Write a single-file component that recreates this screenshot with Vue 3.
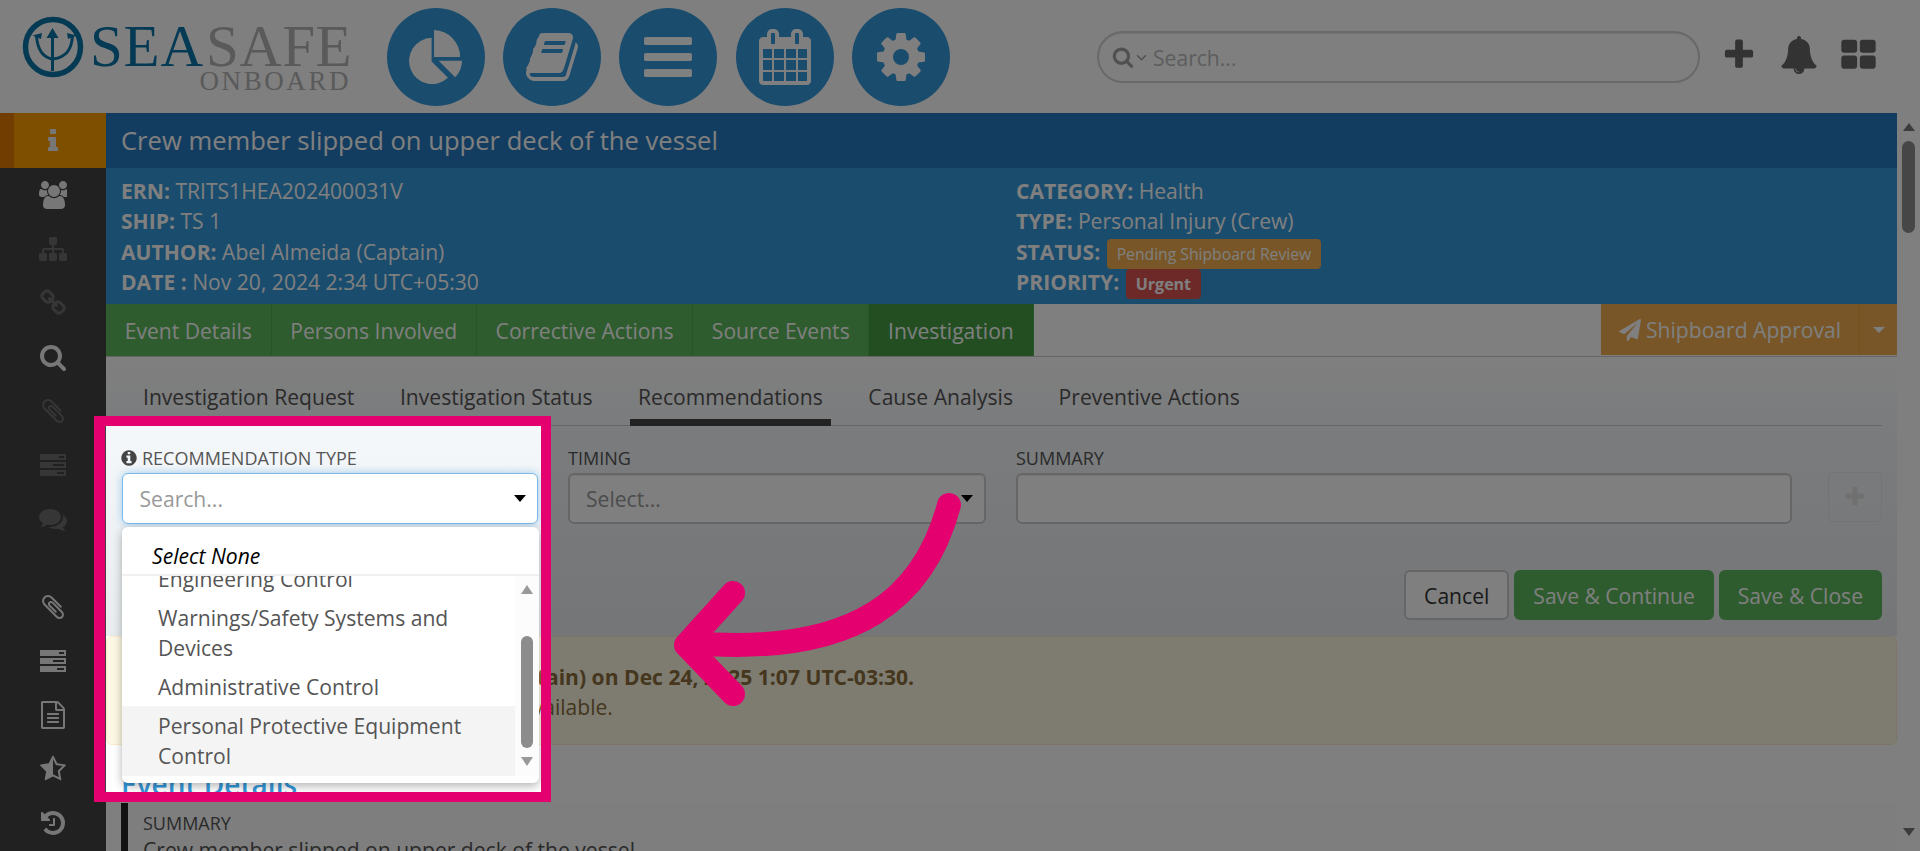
<template>
  <div class="app">
    <!-- top bar -->
    <header class="topbar">
      <div class="logo">
        <svg class="logo-mark" viewBox="0 0 62 62">
          <circle cx="31" cy="31" r="27.5" fill="none" stroke="#0b75a8" stroke-width="5.5" />
          <path d="M30.5 12 L24.5 22 H29 V55 H32 V22 H36.5 Z" fill="#0b75a8" />
          <path d="M14.5 20 C15.5 33 20 41 30 43 M50.5 20 C49.5 33 45 41 31 43" fill="none" stroke="#0b75a8" stroke-width="3" />
          <path d="M10.5 19.5 L20 17 L19 23 Z M54.5 19.5 L45 17 L46 23 Z" fill="#0b75a8" />
        </svg>
        <div class="logo-words">
          <div class="logo-main"><span class="sea">SEA</span><span class="safe">SAFE</span></div>
          <div class="logo-sub">ONBOARD</div>
        </div>
      </div>

      <nav class="round-nav">
        <a v-for="n in navIcons" :key="n.name" class="round-btn">
          <svg :viewBox="n.box"><path :d="icons[n.name]" /></svg>
        </a>
      </nav>

      <div class="global-search">
        <svg class="gs-icon" viewBox="0 0 1792 1792"><path :d="icons.search" /></svg>
        <svg class="gs-chev" viewBox="0 0 10 6"><path d="M1 1l4 4 4-4" fill="none" stroke="currentColor" stroke-width="1.4" /></svg>
        <span>Search...</span>
      </div>

      <div class="top-icons">
        <svg class="ti-plus" viewBox="0 0 1792 1792"><path :d="icons.plus" /></svg>
        <svg class="ti-bell" viewBox="0 0 1792 1792"><path :d="icons.bell" /></svg>
        <svg class="ti-grid" viewBox="0 0 1792 1792"><path :d="icons.grid" /></svg>
      </div>
    </header>

    <div class="body">
      <!-- left rail -->
      <aside class="rail">
        <div
          v-for="item in railItems"
          :key="item.key"
          class="rail-item"
          :class="[item.state, { 'after-gap': item.gap }]"
        >
          <svg v-if="item.icon !== 'server'" viewBox="0 0 1792 1792"><path :d="icons[item.icon]" /></svg>
          <svg v-else viewBox="0 0 28 24">
            <path fill-rule="evenodd" d="M1 1h26v6H1zM20 3v2h5V3zM1 9h26v6H1zM14 11v2h11v-2zM1 17h26v6H1zM18 19v2h7v-2z" />
          </svg>
        </div>
      </aside>

      <main class="main">
        <div class="title-bar">Crew member slipped on upper deck of the vessel</div>

        <section class="info">
          <div class="info-col">
            <div class="info-line"><b>ERN:</b> TRITS1HEA202400031V</div>
            <div class="info-line"><b>SHIP:</b> TS 1</div>
            <div class="info-line"><b>AUTHOR:</b> Abel Almeida (Captain)</div>
            <div class="info-line"><b>DATE :</b> Nov 20, 2024 2:34 UTC+05:30</div>
          </div>
          <div class="info-col">
            <div class="info-line"><b>CATEGORY:</b> Health</div>
            <div class="info-line"><b>TYPE:</b> Personal Injury (Crew)</div>
            <div class="info-line"><b>STATUS:</b> <span class="badge badge-orange">Pending Shipboard Review</span></div>
            <div class="info-line"><b>PRIORITY:</b> <span class="badge badge-red">Urgent</span></div>
          </div>
        </section>

        <div class="main-tabs">
          <a v-for="t in mainTabs" :key="t" class="main-tab" :class="{ active: t === 'Investigation' }">{{ t }}</a>
          <div class="approval">
            <a class="approval-btn">
              <svg viewBox="0 0 1792 1792"><path :d="icons.plane" /></svg>
              Shipboard Approval
            </a>
            <a class="approval-caret"><i /></a>
          </div>
        </div>

        <section class="form-area">
          <div class="sub-tabs">
            <a v-for="t in subTabs" :key="t" class="sub-tab" :class="{ active: t === 'Recommendations' }">{{ t }}</a>
          </div>

          <div class="form-row">
            <div class="field">
              <label>
                <svg viewBox="0 0 1792 1792"><path :d="icons.infoCircle" /></svg>
                RECOMMENDATION TYPE
              </label>
              <div class="select focused">
                <span>Search...</span><i class="caret" />
              </div>
              <!-- open dropdown -->
              <div class="dropdown">
                <div class="select-none">Select None</div>
                <div class="dd-body">
                  <ul class="dd-list">
                    <li v-for="o in options" :key="o" :class="{ hover: o.startsWith('Personal') }">{{ o }}</li>
                  </ul>
                  <div class="dd-scroll">
                    <i class="arrow-up" />
                    <div class="dd-thumb-track"><div class="dd-thumb" /></div>
                    <i class="arrow-down" />
                  </div>
                </div>
              </div>
            </div>
            <div class="field">
              <label>TIMING</label>
              <div class="select">
                <span>Select...</span><i class="caret" />
              </div>
            </div>
            <div class="field">
              <label>SUMMARY</label>
              <div class="select" />
            </div>
            <button class="add-btn">
              <svg viewBox="0 0 1792 1792"><path :d="icons.plus" /></svg>
            </button>
          </div>

          <div class="form-actions">
            <button class="btn">Cancel</button>
            <button class="btn btn-green">Save &amp; Continue</button>
            <button class="btn btn-green">Save &amp; Close</button>
          </div>
        </section>

        <div class="alert">
          <p class="alert-head">Updated by Abel Almeida (Captain) on Dec 24, 2025 1:07 UTC-03:30.</p>
          <p class="alert-text">No recommendation notes are available.</p>
        </div>

        <h2 class="section-title">Event Details</h2>
        <div class="section-block">
          <div class="block-label">SUMMARY</div>
          <div class="block-text">Crew member slipped on upper deck of the vessel</div>
        </div>
      </main>

      <!-- page scrollbar -->
      <div class="page-scroll">
        <i class="ps-up" />
        <div class="ps-thumb" />
        <i class="ps-down" />
      </div>
    </div>

    <!-- tutorial overlay -->
    <div class="spotlight" />
    <svg class="pointer" viewBox="0 0 1920 851">
      <path d="M949 505 C925 595 860 657 692 643" />
      <path d="M733 593 L686 645 L733 694" />
    </svg>
  </div>
</template>

<script setup>
const icons = {
  // three separate wedges, the gaps are part of this logo's look
  pie: 'M718 130V915L1262 1459A768 768 0 1 1 718 130ZM800 -132V764H1664A896 896 0 0 0 800 -132ZM955 892H1728Q1728 1049 1668 1190T1500 1438Z',
  book: 'M1703 478q40 57 18 129l-275 906q-19 64-76.5 107.5t-122.5 43.5h-923q-77 0-148.5-53.5t-99.5-131.5q-24-67-2-127 0-4 3-27t4-37q1-8-3-21.5t-3-19.5q2-11 8-21t16.5-23.5 16.5-23.5q23-38 45-91.5t30-91.5q3-10 .5-30t-.5-28q3-11 17-28t17-23q21-36 42-92t25-90q1-9-2.5-32t.5-28q4-13 22-30.5t22-22.5q19-26 42.5-84.5t27.5-96.5q1-8-3-25.5t-2-26.5q2-8 9-18t18-23 17-21q8-12 16.5-30.5t15-35 16-36 19.5-32 26.5-23.5 36-11.5 47.5 5.5l-1 3q38-9 51-9h761q74 0 114 56t18 130l-274 906q-36 119-71.5 153.5t-128.5 34.5h-869q-27 0-38 15-11 16-1 43 24 70 144 70h923q29 0 56-15.5t35-41.5l300-987q7-22 5-57 38 15 59 43zm-1064 2q-4 13 2 22.5t20 9.5h608q13 0 25.5-9.5t16.5-22.5l21-64q4-13-2-22.5t-20-9.5h-608q-13 0-25.5 9.5t-16.5 22.5zm-83 256q-4 13 2 22.5t20 9.5h608q13 0 25.5-9.5t16.5-22.5l21-64q4-13-2-22.5t-20-9.5h-608q-13 0-25.5 9.5t-16.5 22.5z',
  bars: 'M1664 1344v128q0 26-19 45t-45 19h-1408q-26 0-45-19t-19-45v-128q0-26 19-45t45-19h1408q26 0 45 19t19 45zm0-512v128q0 26-19 45t-45 19h-1408q-26 0-45-19t-19-45v-128q0-26 19-45t45-19h1408q26 0 45 19t19 45zm0-512v128q0 26-19 45t-45 19h-1408q-26 0-45-19t-19-45v-128q0-26 19-45t45-19h1408q26 0 45 19t19 45z',
  calendar: 'M192 1664h288v-288h-288v288zm352 0h320v-288h-320v288zm-352-352h288v-320h-288v320zm352 0h320v-320h-320v320zm-352-384h288v-288h-288v288zm736 736h320v-288h-320v288zm-384-736h320v-288h-320v288zm768 736h288v-288h-288v288zm-384-352h320v-320h-320v320zm-352-864v-288q0-13-9.5-22.5t-22.5-9.5h-64q-13 0-22.5 9.5t-9.5 22.5v288q0 13 9.5 22.5t22.5 9.5h64q13 0 22.5-9.5t9.5-22.5zm736 864h288v-320h-288v320zm-384-384h320v-288h-320v288zm384 0h288v-288h-288v288zm32-480v-288q0-13-9.5-22.5t-22.5-9.5h-64q-13 0-22.5 9.5t-9.5 22.5v288q0 13 9.5 22.5t22.5 9.5h64q13 0 22.5-9.5t9.5-22.5zm384-64v1280q0 52-38 90t-90 38h-1408q-52 0-90-38t-38-90v-1280q0-52 38-90t90-38h128v-96q0-66 47-113t113-47h64q66 0 113 47t47 113v96h384v-96q0-66 47-113t113-47h64q66 0 113 47t47 113v96h128q52 0 90 38t38 90z',
  cog: 'M1152 896q0-106-75-181t-181-75-181 75-75 181 75 181 181 75 181-75 75-181zm512-109v222q0 12-8 23t-20 13l-185 28q-19 54-39 91 35 50 107 138 10 12 10 25t-9 23q-27 37-99 108t-94 71q-12 0-26-9l-138-108q-44 23-91 38-16 136-29 186-7 28-36 28h-222q-14 0-24.5-8.5t-11.5-21.5l-28-184q-49-16-90-37l-141 107q-10 9-25 9-14 0-25-11-126-114-165-168-7-10-7-23 0-12 8-23 15-21 51-66.5t54-70.5q-27-50-41-99l-183-27q-13-2-21-12.5t-8-23.5v-222q0-12 8-23t19-13l186-28q14-46 39-92-40-57-107-138-10-12-10-24 0-10 9-23 26-36 98.5-107.5t94.5-71.5q13 0 26 10l138 107q44-23 91-38 16-136 29-186 7-28 36-28h222q14 0 24.5 8.5t11.5 21.5l28 184q49 16 90 37l142-107q9-9 24-9 13 0 25 10 129 119 165 170 7 8 7 22 0 12-8 23-15 21-51 66.5t-54 70.5q26 50 41 98l183 28q13 2 21 12.5t8 23.5z',
  search: 'M1216 832q0-185-131.5-316.5t-316.5-131.5-316.5 131.5-131.5 316.5 131.5 316.5 316.5 131.5 316.5-131.5 131.5-316.5zm512 832q0 52-38 90t-90 38q-54 0-90-38l-343-342q-179 124-399 124-143 0-273.5-55.5t-225-150-150-225-55.5-273.5 55.5-273.5 150-225 225-150 273.5-55.5 273.5 55.5 225 150 150 225 55.5 273.5q0 220-124 399l343 343q37 37 37 90z',
  plus: 'M1600 736v192q0 40-28 68t-68 28h-416v416q0 40-28 68t-68 28h-192q-40 0-68-28t-28-68v-416h-416q-40 0-68-28t-28-68v-192q0-40 28-68t68-28h416v-416q0-40 28-68t68-28h192q40 0 68 28t28 68v416h416q40 0 68 28t28 68z',
  bell: 'M912 1696q0-16-16-16-59 0-101.5-42.5t-42.5-101.5q0-16-16-16t-16 16q0 73 51.5 124.5t124.5 51.5q16 0 16-16zm816-288q0 52-38 90t-90 38h-448q0 106-75 181t-181 75-181-75-75-181h-448q-52 0-90-38t-38-90q50-42 91-88t85-119.5 74.5-158.5 50-206 19.5-260q0-152 117-282.5t307-158.5q-8-19-8-39 0-40 28-68t68-28 68 28 28 68q0 20-8 39 190 28 307 158.5t117 282.5q0 139 19.5 260t50 206 74.5 158.5 85 119.5 91 88z',
  grid: 'M832 1024v384q0 52-38 90t-90 38h-512q-52 0-90-38t-38-90v-384q0-52 38-90t90-38h512q52 0 90 38t38 90zm0-768v384q0 52-38 90t-90 38h-512q-52 0-90-38t-38-90v-384q0-52 38-90t90-38h512q52 0 90 38t38 90zm896 768v384q0 52-38 90t-90 38h-512q-52 0-90-38t-38-90v-384q0-52 38-90t90-38h512q52 0 90 38t38 90zm0-768v384q0 52-38 90t-90 38h-512q-52 0-90-38t-38-90v-384q0-52 38-90t90-38h512q52 0 90 38t38 90z',
  info: 'M1216 1344v128q0 26-19 45t-45 19h-512q-26 0-45-19t-19-45v-128q0-26 19-45t45-19h64v-384h-64q-26 0-45-19t-19-45v-128q0-26 19-45t45-19h384q26 0 45 19t19 45v576h64q26 0 45 19t19 45zm-128-1152v192q0 26-19 45t-45 19h-256q-26 0-45-19t-19-45v-192q0-26 19-45t45-19h256q26 0 45 19t19 45z',
  infoCircle: 'M1152 1376v-160q0-14-9-23t-23-9h-96v-512q0-14-9-23t-23-9h-320q-14 0-23 9t-9 23v160q0 14 9 23t23 9h96v320h-96q-14 0-23 9t-9 23v160q0 14 9 23t23 9h448q14 0 23-9t9-23zm-128-896v-160q0-14-9-23t-23-9h-192q-14 0-23 9t-9 23v160q0 14 9 23t23 9h192q14 0 23-9t9-23zm640 416q0 209-103 385.5t-279.5 279.5-385.5 103-385.5-103-279.5-279.5-103-385.5 103-385.5 279.5-279.5 385.5-103 385.5 103 279.5 279.5 103 385.5z',
  users: 'M593 896q-162 5-265 128h-134q-82 0-138-40.5t-56-118.5q0-353 124-353 6 0 43.5 21t97.5 42.5 119 21.5q67 0 133-23-5 37-5 66 0 139 81 256zm1071 637q0 120-73 189.5t-194 69.5h-874q-121 0-194-69.5t-73-189.5q0-53 3.5-103.5t14-109 26.5-108.5 43-97.5 62-81 85.5-53.5 111.5-20q10 0 43 21.5t73 48 107 48 135 21.5 135-21.5 107-48 73-48 43-21.5q61 0 111.5 20t85.5 53.5 62 81 43 97.5 26.5 108.5 14 109 3.5 103.5zm-1024-1277q0 106-75 181t-181 75-181-75-75-181 75-181 181-75 181 75 75 181zm704 384q0 159-112.5 271.5t-271.5 112.5-271.5-112.5-112.5-271.5 112.5-271.5 271.5-112.5 271.5 112.5 112.5 271.5zm576 225q0 78-56 118.5t-138 40.5h-134q-103-123-265-128 81-117 81-256 0-29-5-66 66 23 133 23 59 0 119-21.5t97.5-42.5 43.5-21q124 0 124 353zm-128-609q0 106-75 181t-181 75-181-75-75-181 75-181 181-75 181 75 75 181z',
  sitemap: 'M1792 1248v320q0 40-28 68t-68 28h-320q-40 0-68-28t-28-68v-320q0-40 28-68t68-28h96v-192h-512v192h96q40 0 68 28t28 68v320q0 40-28 68t-68 28h-320q-40 0-68-28t-28-68v-320q0-40 28-68t68-28h96v-192h-512v192h96q40 0 68 28t28 68v320q0 40-28 68t-68 28h-320q-40 0-68-28t-28-68v-320q0-40 28-68t68-28h96v-192q0-52 38-90t90-38h512v-192h-96q-40 0-68-28t-28-68v-320q0-40 28-68t68-28h320q40 0 68 28t28 68v320q0 40-28 68t-68 28h-96v192h512q52 0 90 38t38 90v192h96q40 0 68 28t28 68z',
  link: 'M1520 1216q0-40-28-68l-208-208q-28-28-68-28-42 0-72 32 3 3 19 18.5t21.5 21.5 15 19 13 25.5 3.5 27.5q0 40-28 68t-68 28q-15 0-27.5-3.5t-25.5-13-19-15-21.5-21.5-18.5-19q-33 31-33 73 0 40 28 68l206 207q27 27 68 27 40 0 68-26l147-146q28-28 28-67zm-703-705q0-40-28-68l-206-207q-28-28-68-28-39 0-68 27l-147 146q-28 28-28 67 0 40 28 68l208 208q27 27 68 27 42 0 72-31-3-3-19-18.5t-21.5-21.5-15-19-13-25.5-3.5-27.5q0-40 28-68t68-28q15 0 27.5 3.5t25.5 13 19 15 21.5 21.5 18.5 19q33-31 33-73zm895 705q0 120-85 203l-147 146q-83 83-203 83-121 0-204-85l-206-207q-83-83-83-203 0-123 88-209l-88-88q-86 88-208 88-120 0-204-84l-208-208q-84-84-84-204t85-203l147-146q83-83 203-83 121 0 204 85l206 207q83 83 83 203 0 123-88 209l88 88q86-88 208-88 120 0 204 84l208 208q84 84 84 204z',
  clip: 'M1596 1385q0 117-79 196t-196 79q-135 0-235-100l-777-776q-113-115-113-271 0-159 110-270t269-111q158 0 273 113l605 606q10 10 10 22 0 16-30.5 46.5t-46.5 30.5q-13 0-23-10l-606-607q-79-77-181-77-106 0-179 75t-73 181q0 105 76 181l776 777q63 63 145 63 64 0 106-42t42-106q0-82-63-145l-581-581q-26-24-60-24-29 0-48 19t-19 48q0 32 25 59l410 410q10 10 10 22 0 16-31 47t-47 31q-12 0-22-10l-410-410q-63-61-63-149 0-82 57-139t139-57q88 0 149 63l581 581q100 98 100 235z',
  comments: 'M1408 768q0 139-94 257t-256.5 186.5-353.5 68.5q-86 0-176-16-124 88-278 128-36 9-86 16h-3q-11 0-20.5-8t-11.5-21q-1-3-1-6.5t.5-6.5 2-6l2.5-5 3.5-5.5 4-5 4.5-5 4-4.5q5-6 23-25t26-29.5 22.5-29 25-38.5 20.5-44q-124-72-195-177t-71-224q0-139 94-257t256.5-186.5 353.5-68.5 353.5 68.5 256.5 186.5 94 257zm384 256q0 120-71 224.5t-195 176.5q10 24 20.5 44t25 38.5 22.5 29 26 29.5 23 25q1 1 4 4.5t4.5 5 4 5 3.5 5.5l2.5 5 2 6 .5 6.5-1 6.5q-3 14-13 22t-22 7q-50-7-86-16-154-40-278-128-90 16-176 16-271 0-472-132 58 4 88 4 161 0 309-45t264-129q125-92 192-212t67-254q0-77-23-152 129 71 204 178t75 230z',
  file: 'M1596 380q28 28 48 76t20 88v1152q0 40-28 68t-68 28h-1344q-40 0-68-28t-28-68v-1600q0-40 28-68t68-28h896q40 0 88 20t76 48zm-444-244v376h376q-10-29-22-41l-313-313q-12-12-41-22zm384 1528v-1024h-416q-40 0-68-28t-28-68v-416h-768v1536h1280zm-1024-864q0-14 9-23t23-9h704q14 0 23 9t9 23v64q0 14-9 23t-23 9h-704q-14 0-23-9t-9-23v-64zm736 224q14 0 23 9t9 23v64q0 14-9 23t-23 9h-704q-14 0-23-9t-9-23v-64q0-14 9-23t23-9h704zm0 256q14 0 23 9t9 23v64q0 14-9 23t-23 9h-704q-14 0-23-9t-9-23v-64q0-14 9-23t23-9h704z',
  star: 'M1250 957l257-250-356-52-66-10-30-60-159-322v963l59 31 318 168-60-355-12-66zm452-262l-363 354 86 500q5 33-6 51.5t-34 18.5q-17 0-40-12l-449-236-449 236q-23 12-40 12-23 0-34-18.5t-6-51.5l86-500-364-354q-32-32-23-59.5t54-34.5l502-73 225-455q20-41 49-41 28 0 49 41l225 455 502 73q45 7 54 34.5t-24 59.5z',
  history: 'M1664 896q0 156-61 298t-164 245-245 164-298 61q-172 0-327-72.5t-264-204.5q-7-10-6.5-22.5t8.5-20.5l137-138q10-9 25-9 16 2 23 12 73 95 179 147t225 52q104 0 198.5-40.5t163.5-109.5 109.5-163.5 40.5-198.5-40.5-198.5-109.5-163.5-163.5-109.5-198.5-40.5q-98 0-188 35.5t-160 101.5l137 138q31 30 14 69-17 40-59 40h-448q-26 0-45-19t-19-45v-448q0-42 40-59 39-17 69 14l130 129q107-101 244.5-156.5t284.5-55.5q156 0 298 61t245 164 164 245 61 298zm-640-288v448q0 14-9 23t-23 9h-320q-14 0-23-9t-9-23v-64q0-14 9-23t23-9h224v-352q0-14 9-23t23-9h64q14 0 23 9t9 23z',
  plane: 'M1764 11q33 24 27 64l-256 1536q-5 29-32 45-14 8-31 8-11 0-24-5l-453-185-242 295q-18 23-49 23-13 0-22-4-19-7-30.5-23.5t-11.5-36.5v-349l864-1059-1069 925-395-162q-37-14-40-55-2-40 32-59l1664-960q15-9 32-9 20 0 36 11z',
}

const std = '0 0 1792 1792'
const navIcons = [
  { name: 'pie', box: '-66 -164 1860 1860' },
  { name: 'book', box: std },
  { name: 'bars', box: std },
  { name: 'calendar', box: std },
  { name: 'cog', box: std },
]

const railItems = [
  { key: 1, icon: 'info', state: 'active' },
  { key: 2, icon: 'users' },
  { key: 3, icon: 'sitemap', state: 'off' },
  { key: 4, icon: 'link', state: 'off' },
  { key: 5, icon: 'search' },
  { key: 6, icon: 'clip', state: 'off' },
  { key: 7, icon: 'server', state: 'off' },
  { key: 8, icon: 'comments', state: 'off' },
  { key: 9, icon: 'clip', gap: true },
  { key: 10, icon: 'server' },
  { key: 11, icon: 'file' },
  { key: 12, icon: 'star' },
  { key: 13, icon: 'history' },
]

const mainTabs = ['Event Details', 'Persons Involved', 'Corrective Actions', 'Source Events', 'Investigation']
const subTabs = ['Investigation Request', 'Investigation Status', 'Recommendations', 'Cause Analysis', 'Preventive Actions']
const options = [
  'Engineering Control',
  'Warnings/Safety Systems and Devices',
  'Administrative Control',
  'Personal Protective Equipment Control',
]
</script>

<style scoped>
.app {
  position: relative;
  width: 1920px;
  height: 851px;
  overflow: hidden;
  display: flex;
  flex-direction: column;
  background: #fff;
  font-family: "Open Sans", "Liberation Sans", sans-serif;
  font-size: 21.1px;
  color: #555;
}

/* top bar */
.topbar {
  height: 113px;
  flex-shrink: 0;
  display: flex;
  align-items: center;
  position: relative;
}
.logo { display: flex; align-items: flex-start; width: 387px; padding-left: 22px; box-sizing: border-box; }
.logo-mark { width: 62px; height: 62px; margin-top: -2px; flex-shrink: 0; }
.logo-words { margin-left: 6px; font-family: "Liberation Serif", serif; }
.logo-main { font-size: 59px; line-height: 60px; height: 51px; margin-top: -2px; }
.sea { color: #0b75a8; letter-spacing: 0.8px; }
.safe { color: #b4b4b4; margin-left: 2px; letter-spacing: 0.5px; }
.logo-sub { color: #b4b4b4; font-size: 27px; line-height: 29px; letter-spacing: 2.6px; text-align: right; padding-right: 1px; }

.round-nav { display: flex; gap: 18.2px; }
.round-btn {
  width: 98px;
  height: 98px;
  border-radius: 50%;
  background: #3498db;
  display: flex;
  align-items: center;
  justify-content: center;
}
.round-btn svg { width: 56px; height: 56px; fill: #fff; }

.global-search {
  position: absolute;
  left: 1097px;
  top: 31px;
  width: 603px;
  height: 52px;
  box-sizing: border-box;
  border: 2px solid #d2d2d2;
  border-radius: 26px;
  display: flex;
  align-items: center;
  padding-left: 13px;
  color: #bbb;
  box-shadow: inset 0 1px 1px rgba(0, 0, 0, 0.08);
}
.gs-icon { width: 22px; height: 22px; fill: #a0a0a0; }
.gs-chev { width: 11px; height: 7px; margin: 0 6px 0 2px; color: #a0a0a0; }

.top-icons { position: absolute; left: 1724px; top: 36px; display: flex; align-items: center; }
.top-icons svg { fill: #666; }
.ti-plus { width: 36px; height: 36px; margin-left: -3px; }
.ti-bell { width: 38px; height: 38px; margin-left: 23px; }
.ti-grid { width: 37px; height: 37px; margin-left: 22px; }

/* body */
.body { flex: 1; display: flex; min-height: 0; }

.rail { width: 106px; flex-shrink: 0; background: #424242; display: flex; flex-direction: column; }
.rail-item {
  height: 54px;
  flex-shrink: 0;
  display: flex;
  align-items: center;
  justify-content: center;
}
.rail-item svg { width: 28px; height: 28px; fill: #eee; }
.rail-item.off svg { fill: #6c6c6c; }
.rail-item.active { height: 55px; background: #ff9f00; border-left: 14px solid #e47a00; box-sizing: border-box; padding-right: 14px; }
.rail-item.after-gap { margin-top: 34px; }

.main { flex: 1; min-width: 0; display: flex; flex-direction: column; }

.title-bar {
  height: 55px;
  flex-shrink: 0;
  display: flex;
  align-items: center;
  padding-left: 15px;
  background: #277ac0;
  color: #fff;
  font-size: 25.6px;
}

.info {
  height: 136px;
  flex-shrink: 0;
  box-sizing: border-box;
  background: #3498db;
  color: #fff;
  padding: 8px 15px 0;
  display: grid;
  grid-template-columns: 895px 1fr;
}
.info-line { height: 30.3px; line-height: 30px; white-space: nowrap; }
.info-line b { font-weight: 700; }
.badge {
  display: inline-block;
  border-radius: 4px;
  font-size: 15.7px;
  line-height: 30px;
  height: 30px;
  padding: 0 10px;
  vertical-align: top;
  margin-top: 2px;
}
.badge-orange { background: #f0ad4e; margin-left: 1px; }
.badge-red { background: #d9534f; font-weight: 700; font-size: 16px; margin-left: 1px; }

.main-tabs {
  height: 53px;
  flex-shrink: 0;
  display: flex;
  align-items: stretch;
  box-sizing: border-box;
  border-bottom: 1px solid #ccc;
  background: #fff;
}
.main-tab {
  background: #5cb85c;
  color: #fff;
  padding: 0 18.7px;
  display: flex;
  align-items: center;
  border-right: 1px solid #4cae4c;
}
.main-tab.active { background: #449d44; }
.approval { margin-left: auto; display: flex; height: 51px; color: #fff; background: #f0ad4e; }
.approval-btn { display: flex; align-items: center; gap: 5px; padding: 0 18px; border-right: 1px solid #eca237; width: 259px; box-sizing: border-box; white-space: nowrap; }
.approval-btn svg { width: 22px; height: 22px; fill: #fff; flex-shrink: 0; }
.approval-caret { width: 37px; display: flex; align-items: center; justify-content: center; }
.approval-caret i { border: 6px solid transparent; border-top-color: #fff; border-bottom: 0; }

.form-area {
  flex-shrink: 0;
  height: 279px;
  box-sizing: border-box;
  padding: 0 15px;
  background: linear-gradient(#fff, #f5f8fa 25%, #e8ecee);
}

.sub-tabs {
  height: 69px;
  box-sizing: border-box;
  display: flex;
  gap: 29.6px;
  align-items: stretch;
  padding-left: 14px;
  border-bottom: 1px solid #ccc;
}
.sub-tab {
  padding: 10px 8px 0;
  display: flex;
  align-items: center;
  color: #555;
}
.sub-tab.active { border-bottom: 7px solid #444; margin-bottom: -1px; padding-top: 16px; }

.form-row {
  display: grid;
  grid-template-columns: 416px 418px 776px 1fr;
  column-gap: 30px;
  padding: 20px 0 30px 1px;
  border-bottom: 1px solid #eee;
}
.field { position: relative; }
.field label {
  display: flex;
  align-items: center;
  gap: 4px;
  height: 24px;
  margin-bottom: 3px;
  font-size: 18px;
  color: #555;
}
.field label svg { width: 18px; height: 18px; fill: #444; margin-left: -2px; }
.select {
  height: 51px;
  box-sizing: border-box;
  border: 2px solid #ccc;
  border-radius: 6px;
  background: #fff;
  display: flex;
  align-items: center;
  justify-content: space-between;
  padding: 0 11px 0 16px;
  color: #999;
  box-shadow: inset 0 1px 1px rgba(0, 0, 0, 0.075);
}
.select.focused { border: 1.5px solid #7db8e8; padding-left: 16.5px; box-shadow: 0 0 8px rgba(102, 175, 233, 0.6); }
.caret { border: 6px solid transparent; border-top: 7px solid #000; border-bottom: 0; }

.dropdown {
  position: absolute;
  top: 81px;
  left: 0;
  right: -1px;
  height: 256px;
  box-sizing: border-box;
  background: #fff;
  border-radius: 6px;
  box-shadow: 0 3px 10px rgba(0, 0, 0, 0.3);
  z-index: 3;
  overflow: hidden;
  display: flex;
  flex-direction: column;
}
.select-none {
  height: 49px;
  flex-shrink: 0;
  box-sizing: border-box;
  padding: 12px 0 0 30px;
  line-height: 34px;
  font-style: italic;
  color: #000;
  border-bottom: 2px solid #f0f0f0;
}
.dd-body { height: 200px; display: flex; }
.dd-list {
  list-style: none;
  margin: 0;
  padding: 0;
  width: 393px;
  flex-shrink: 0;
  overflow: hidden;
  color: #555;
  line-height: 30px;
}
.dd-list li { padding: 4.5px 30px 4.5px 36px; }
.dd-list li:first-child { margin-top: -17px; }
.dd-list li.hover { background: #f4f4f4; padding-bottom: 5.5px; }
.dd-scroll { flex: 1; background: #fcfcfc; display: flex; flex-direction: column; align-items: center; padding-top: 9px; }
.arrow-up { border: 6px solid transparent; border-bottom: 9px solid #999; border-top: 0; }
.arrow-down { border: 6px solid transparent; border-top: 9px solid #999; border-bottom: 0; margin-top: 9px; }
.dd-thumb-track { height: 154px; width: 12px; display: flex; align-items: flex-end; }
.dd-thumb { width: 12px; height: 112px; border-radius: 6px; background: #8c8c8c; }

.add-btn {
  justify-self: end;
  align-self: end;
  width: 54px;
  height: 50px;
  margin-bottom: 2px;
  padding: 0;
  background: transparent;
  border: 1px solid #e8e8e8;
  border-radius: 4px;
  display: flex;
  align-items: center;
  justify-content: center;
}
.add-btn svg { width: 24px; height: 24px; fill: #e0e0e0; }

.form-actions { display: flex; justify-content: flex-end; gap: 5px; padding-top: 15px; }
.btn {
  height: 50px;
  padding: 0 18px;
  font: inherit;
  color: #333;
  background: #fff;
  border: 2px solid #ccc;
  border-radius: 6px;
}
.btn-green { padding: 0 17px; background: #5cb85c; border-color: #5cb85c; color: #fff; }

.alert {
  flex-shrink: 0;
  height: 109px;
  box-sizing: border-box;
  background: #fcf8e3;
  border: 1px solid #faebcc;
  border-radius: 6px;
  color: #8a6d3b;
  padding: 25px 0 0 112px;
  line-height: 30px;
}
.alert p { margin: 0; }
.alert-head { font-weight: 700; }
.alert-text { margin-left: -6px !important; }

.section-title {
  margin: 21px 0 0 15px;
  height: 37px;
  line-height: 37px;
  font-size: 28px;
  font-weight: 600;
  color: #3498db;
  flex-shrink: 0;
}
.section-block {
  margin-left: 15px;
  background: #fcfcfc;
  border-left: 7px solid #222;
  padding: 8px 15px 0;
  flex: 1;
}
.block-label { font-size: 18px; line-height: 24px; color: #555; }
.block-text { line-height: 30px; color: #555; }

.page-scroll {
  width: 23px;
  flex-shrink: 0;
  background: #fff;
  position: relative;
  display: flex;
  flex-direction: column;
  align-items: center;
}
.ps-up { margin-top: 10px; border: 6px solid transparent; border-bottom: 8px solid #777; border-top: 0; }
.ps-thumb { width: 13px; height: 92px; margin-top: 10px; border-radius: 7px; background: #8c8c8c; }
.ps-down { position: absolute; bottom: 15px; border: 6px solid transparent; border-top: 8px solid #777; border-bottom: 0; }

/* tutorial overlay */
.spotlight {
  position: absolute;
  left: 94px;
  top: 416px;
  width: 457px;
  height: 386px;
  box-sizing: border-box;
  border: 10px solid #e5006f;
  border-left-width: 11px;
  box-shadow: 0 0 0 3000px rgba(0, 0, 0, 0.5);
  pointer-events: none;
  z-index: 5;
}
.pointer {
  position: absolute;
  inset: 0;
  width: 1920px;
  height: 851px;
  pointer-events: none;
  z-index: 6;
}
.pointer path {
  fill: none;
  stroke: #e5006f;
  stroke-width: 24;
  stroke-linecap: round;
  stroke-linejoin: round;
}
</style>
